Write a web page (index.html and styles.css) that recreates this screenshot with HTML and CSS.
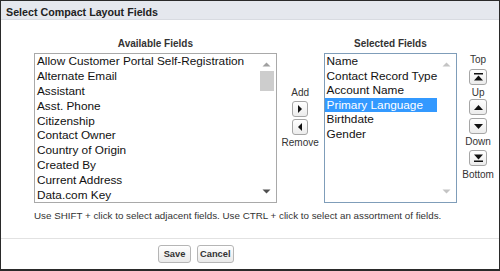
FILE: index.html
```html
<!DOCTYPE html>
<html>
<head>
<meta charset="utf-8">
<link rel="stylesheet" href="styles.css">
</head>
<body>
<div class="dialog">
  <div class="title">Select Compact Layout Fields</div>
  <div class="body">
    <div class="picker">
      <div class="col-avail">
        <div class="label">Available Fields</div>
        <div class="listbox avail">
          <div class="items">
            <div class="item">Allow Customer Portal Self-Registration</div>
            <div class="item">Alternate Email</div>
            <div class="item">Assistant</div>
            <div class="item">Asst. Phone</div>
            <div class="item">Citizenship</div>
            <div class="item">Contact Owner</div>
            <div class="item">Country of Origin</div>
            <div class="item">Created By</div>
            <div class="item">Current Address</div>
            <div class="item">Data.com Key</div>
          </div>
          <div class="scroll">
            <svg class="arrow" width="9" height="5" viewBox="0 0 9 5"><polygon points="0.5,4.5 4.5,0.5 8.5,4.5" fill="#a0a0a0"/></svg>
            <div class="thumb"></div>
            <div class="spacer"></div>
            <svg class="arrow" width="9" height="5" viewBox="0 0 9 5"><polygon points="0.5,0.5 8.5,0.5 4.5,4.5" fill="#505050"/></svg>
          </div>
        </div>
      </div>
      <div class="col-move">
        <div class="small">Add</div>
        <div class="btn sq add"><svg width="6" height="8" viewBox="0 0 6 8"><polygon points="1,0 5,4 1,8" fill="#111"/></svg></div>
        <div class="btn sq rem"><svg width="6" height="8" viewBox="0 0 6 8"><polygon points="5,0 1,4 5,8" fill="#111"/></svg></div>
        <div class="small lbl-rem">Remove</div>
      </div>
      <div class="col-sel">
        <div class="label">Selected Fields</div>
        <div class="listbox sel">
          <div class="items">
            <div class="item">Name</div>
            <div class="item">Contact Record Type</div>
            <div class="item">Account Name</div>
            <div class="item selected">Primary Language</div>
            <div class="item">Birthdate</div>
            <div class="item">Gender</div>
          </div>
          <div class="scroll faint">
            <svg class="arrow" width="9" height="5" viewBox="0 0 9 5"><polygon points="0.5,4.5 4.5,0.5 8.5,4.5" fill="#c4c4c4"/></svg>
            <div class="spacer"></div>
            <svg class="arrow" width="9" height="5" viewBox="0 0 9 5"><polygon points="0.5,0.5 8.5,0.5 4.5,4.5" fill="#c4c4c4"/></svg>
          </div>
        </div>
      </div>
      <div class="col-order">
        <div class="small">Top</div>
        <div class="btn ord o-top"><svg width="9" height="8" viewBox="0 0 9 8"><rect x="0" y="0" width="9" height="1.5" fill="#111"/><polygon points="0,7.5 4.5,2.5 9,7.5" fill="#111"/></svg></div>
        <div class="small o-lbl">Up</div>
        <div class="btn ord o-up"><svg width="9" height="5" viewBox="0 0 9 5"><polygon points="0,5 4.5,0 9,5" fill="#111"/></svg></div>
        <div class="btn ord o-down"><svg width="9" height="5" viewBox="0 0 9 5"><polygon points="0,0 9,0 4.5,5" fill="#111"/></svg></div>
        <div class="small o-lbl">Down</div>
        <div class="btn ord o-bot"><svg width="9" height="8" viewBox="0 0 9 8"><polygon points="0,0.5 9,0.5 4.5,5.5" fill="#111"/><rect x="0" y="6.5" width="9" height="1.5" fill="#111"/></svg></div>
        <div class="small o-lbl">Bottom</div>
      </div>
    </div>
    <div class="help">Use SHIFT + click to select adjacent fields. Use CTRL + click to select an assortment of fields.</div>
  </div>
  <div class="footer">
    <button class="fbtn">Save</button>
    <button class="fbtn">Cancel</button>
  </div>
</div>
</body>
</html>
```
FILE: styles.css
```css
html, body {
  margin: 0;
  padding: 0;
  background: #ffffff;
}
body {
  font-family: "Liberation Sans", Arial, sans-serif;
  color: #222;
}
.dialog {
  width: 500px;
  height: 271px;
  box-sizing: border-box;
  border: 1px solid #2a2a2a;
  border-bottom-width: 2px;
  display: flex;
  flex-direction: column;
  background: #fff;
}
.title {
  height: 19px;
  box-sizing: border-box;
  background: #e5e8ee;
  border-bottom: 1px solid #d8dbe1;
  font-weight: bold;
  font-size: 10.7px;
  color: #222;
  padding: 5px 0 0 5px;
  line-height: 12px;
}
.body {
  flex: 1;
  padding: 0 0 0 33px;
}
.picker {
  display: flex;
  align-items: flex-start;
  margin-top: 17px;
}
.label {
  font-weight: bold;
  font-size: 10px;
  color: #333;
  text-align: center;
  height: 16px;
  line-height: 13px;
}
.col-avail { width: 244px; }
.col-sel { width: 134px; }
.listbox {
  box-sizing: border-box;
  height: 150px;
  display: flex;
  background: #fff;
}
.avail { border: 1px solid #a9a9a9; }
.sel { border: 1px solid #7f9db9; }
.items {
  flex: 1;
  padding-top: 0;
  min-width: 0;
}
.item {
  font-size: 11.8px;
  line-height: 14.9px;
  height: 14.9px;
  padding-left: 2px;
  white-space: nowrap;
  color: #111;
}
.sel .item { line-height: 14.6px; height: 14.6px; }
.item.selected {
  background: #3399ff;
  color: #fff;
}
.scroll {
  width: 18px;
  display: flex;
  flex-direction: column;
  align-items: center;
  padding: 8px 0 8px 0;
}
.sel .scroll { width: 19px; }
.thumb {
  width: 14px;
  height: 20px;
  background: #cdcdcd;
  margin-top: 4px;
}
.spacer { flex: 1; }
.col-move {
  width: 47px;
  display: flex;
  flex-direction: column;
  align-items: center;
  padding-top: 50px;
}
.col-order {
  width: 42px;
  display: flex;
  flex-direction: column;
  align-items: center;
  padding-top: 17px;
}
.small {
  font-size: 10px;
  color: #333;
  line-height: 12px;
}
.btn {
  box-sizing: border-box;
  border: 1px solid #a6a6a6;
  border-radius: 3px;
  background: linear-gradient(#ffffff, #ececec);
  display: flex;
  align-items: center;
  justify-content: center;
}
.sq {
  width: 16px;
  height: 16px;
}
.add { margin-top: 2px; }
.rem { margin-top: 2px; }
.lbl-rem { margin-top: 2px; }
.ord {
  width: 18px;
  height: 16px;
}
.o-top { margin-top: 3px; }
.o-lbl { margin-top: 2px; }
.o-up { margin-top: 0; }
.o-down { margin-top: 3px; }
.o-bot { margin-top: 2px; }
.o-bot + .o-lbl { margin-top: 3px; }
.help {
  font-size: 9.8px;
  color: #333;
  margin-top: 7px;
  line-height: 12px;
}
.footer {
  height: 31px;
  border-top: 1px solid #e2e2e2;
  display: flex;
  align-items: center;
  padding-left: 157px;
  gap: 6px;
  box-sizing: border-box;
}
.fbtn {
  font-family: "Liberation Sans", Arial, sans-serif;
  font-size: 9.3px;
  font-weight: bold;
  color: #333;
  height: 18px;
  min-width: 33px;
  padding: 0 2px;
  border: 1px solid #b5b5b5;
  border-radius: 3px;
  background: linear-gradient(#ffffff, #e9e9e9);
  margin: 0;
}
```
